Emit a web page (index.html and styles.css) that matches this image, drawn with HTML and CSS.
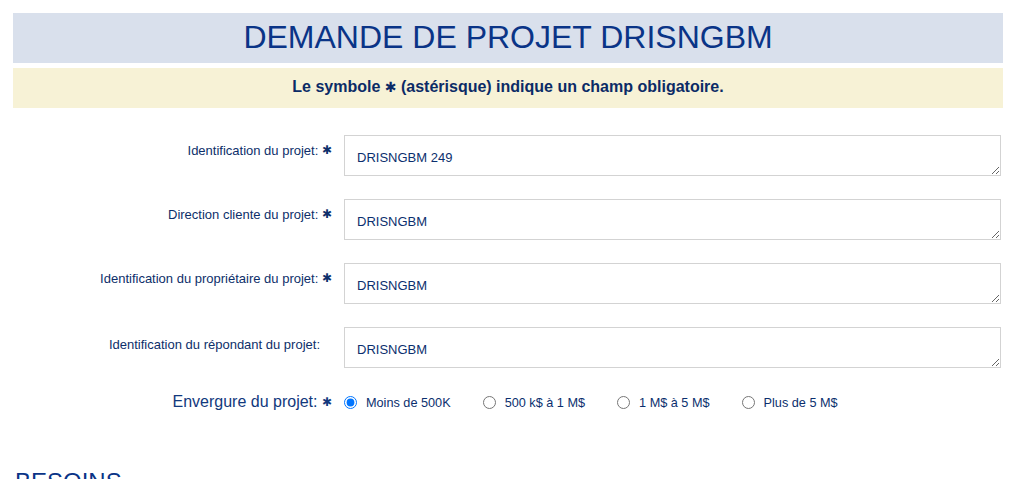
FILE: index.html
```html
<!DOCTYPE html>
<html lang="fr">
<head>
<meta charset="utf-8">
<title>Demande de projet DRISNGBM</title>
<link rel="stylesheet" href="styles.css">
</head>
<body>
<div class="page">
  <h1 class="title">DEMANDE DE PROJET DRISNGBM</h1>
  <p class="notice">Le symbole <span class="req req-big">✱</span> (astérisque) indique un champ obligatoire.</p>

  <form class="form">
    <div class="row">
      <label class="label" for="f1">Identification du projet: <span class="req">✱</span></label>
      <textarea class="field" id="f1">DRISNGBM 249</textarea>
    </div>
    <div class="row">
      <label class="label" for="f2">Direction cliente du projet: <span class="req">✱</span></label>
      <textarea class="field" id="f2">DRISNGBM</textarea>
    </div>
    <div class="row">
      <label class="label" for="f3">Identification du propriétaire du projet: <span class="req">✱</span></label>
      <textarea class="field" id="f3">DRISNGBM</textarea>
    </div>
    <div class="row">
      <label class="label label-plain" for="f4">Identification du répondant du projet:</label>
      <textarea class="field" id="f4">DRISNGBM</textarea>
    </div>
    <div class="row row-radio">
      <span class="label label-big">Envergure du projet: <span class="req">✱</span></span>
      <div class="options">
        <label class="opt"><input type="radio" name="env" checked><span>Moins de 500K</span></label>
        <label class="opt"><input type="radio" name="env"><span>500 k$ à 1 M$</span></label>
        <label class="opt"><input type="radio" name="env"><span>1 M$ à 5 M$</span></label>
        <label class="opt"><input type="radio" name="env"><span>Plus de 5 M$</span></label>
      </div>
    </div>
  </form>

  <h2 class="section">BESOINS</h2>
</div>
</body>
</html>
```

FILE: styles.css
```css
html, body {
  margin: 0;
  padding: 0;
  background: #ffffff;
}

body {
  font-family: "Liberation Sans", Arial, sans-serif;
  color: #0b2f6e;
}

.page {
  width: 990px;
  padding: 13px 0 0 13px;
}

.title {
  margin: 0;
  height: 50px;
  box-sizing: border-box;
  padding-top: 6px;
  background: #d9e0ec;
  color: #0a3487;
  font-size: 32px;
  font-weight: normal;
  line-height: 37px;
  text-align: center;
}

.notice {
  margin: 5px 0 0;
  height: 40px;
  box-sizing: border-box;
  padding-top: 10px;
  background: #f7f2d6;
  color: #0b2b66;
  font-size: 16px;
  font-weight: bold;
  line-height: 18px;
  text-align: center;
}

.req {
  font-family: "DejaVu Sans", sans-serif;
  font-size: 12px;
  font-weight: bold;
  position: relative;
  top: -1px;
}

.req-big {
  font-size: 14px;
  top: 0;
}

.form {
  margin-top: 27px;
  display: flex;
  flex-direction: column;
  gap: 23px;
}

.row {
  display: grid;
  grid-template-columns: 319px 657px;
  column-gap: 12px;
  align-items: start;
}

.label {
  padding-top: 8px;
  text-align: right;
  font-size: 13px;
  line-height: 15px;
  color: #0d2f6a;
}

.label-plain {
  padding-top: 10px;
  padding-right: 12px;
}

.field {
  display: block;
  width: 657px;
  height: 41px;
  box-sizing: border-box;
  margin: 0;
  padding: 14px 12px 0;
  border: 1px solid #d3d3d3;
  border-radius: 0;
  font-family: "Liberation Sans", Arial, sans-serif;
  font-size: 13px;
  line-height: 15px;
  color: #0b2f6e;
  background: #fff;
}

.row-radio {
  margin-top: 1px;
  align-items: center;
  height: 20px;
}

.label-big {
  padding-top: 0;
  font-size: 16px;
  line-height: 20px;
  color: #12397d;
}

.options {
  display: flex;
  align-items: center;
  gap: 32px;
}

.opt {
  display: flex;
  align-items: center;
  gap: 9px;
  font-size: 12.7px;
  color: #0b2f6e;
}

.opt input {
  margin: 0;
  width: 13px;
  height: 13px;
}

.section {
  margin: 56px 0 0 2px;
  font-size: 24px;
  font-weight: normal;
  line-height: 28px;
  color: #0a3487;
}
```
